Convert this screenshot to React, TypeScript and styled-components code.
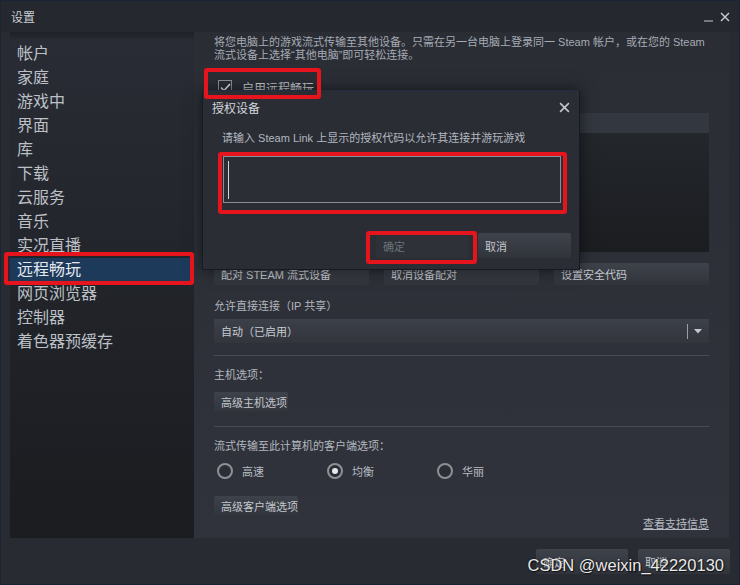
import styled, { createGlobalStyle } from "styled-components";

const GlobalStyle = createGlobalStyle`
  html, body {
    margin: 0;
    padding: 0;
    background: #282b32;
  }
  body {
    font-family: "Liberation Sans", "Noto Sans CJK SC", sans-serif;
  }
  * {
    box-sizing: border-box;
  }
`;

const Window = styled.div`
  position: relative;
  width: 740px;
  height: 585px;
  border: 1px solid #1b2433;
  background: #282b32;
  display: flex;
  flex-direction: column;
  overflow: hidden;
`;

const TitleBar = styled.div`
  height: 31px;
  flex: none;
  display: flex;
  align-items: center;
  justify-content: space-between;
  padding: 0 9px 0 10px;
  background: #25282e;
  color: #c9cdd4;
  font-size: 12px;
`;

const WindowControls = styled.div`
  display: flex;
  align-items: center;
  gap: 6px;
`;

const Body = styled.div`
  height: 506px;
  flex: none;
  display: flex;
  padding-left: 9px;
`;

const Sidebar = styled.nav`
  width: 184px;
  flex: none;
  padding-top: 10px;
  background: linear-gradient(
    180deg,
    #1e2127 0px,
    #23262c 5px,
    #292c34 8px,
    #1b1d21 92%
  );
`;

const MenuItem = styled.div<{ $active?: boolean }>`
  height: 24px;
  line-height: 24px;
  padding-left: 7px;
  font-size: 16px;
  color: ${(p) => (p.$active ? "#e4e8ee" : "#bcc0c7")};
  background: ${(p) => (p.$active ? "#1d3a5b" : "transparent")};
  white-space: nowrap;
`;

const Panel = styled.section`
  width: 535px;
  flex: none;
  padding: 4px 20px 0 20px;
  display: flex;
  flex-direction: column;
  background: linear-gradient(180deg, #2a2d34, #30333b);
`;

const Intro = styled.p`
  margin: 0;
  font-size: 11px;
  line-height: 13px;
  color: #a6abb4;
`;

const CheckRow = styled.label`
  margin-top: 18px;
  height: 14px;
  display: flex;
  align-items: center;
  gap: 10px;
  padding-left: 4px;
  font-size: 12px;
  color: #c4c8ce;
`;

const CheckBox = styled.span`
  width: 14px;
  height: 14px;
  border: 1px solid #8d9199;
  background: #2a2d34;
  display: flex;
  align-items: center;
  justify-content: center;
`;

const DeviceList = styled.div`
  margin-top: 19px;
  height: 139px;
  display: flex;
  flex-direction: column;
  background: linear-gradient(180deg, #25282d, #1b1d21);
`;

const DeviceHeader = styled.div`
  height: 20px;
  background: #33373f;
`;

const ButtonRow = styled.div`
  margin-top: 11px;
  display: grid;
  grid-template-columns: 155px 155px 155px;
  justify-content: space-between;
`;

const Button = styled.button<{ $w?: number; $h?: number; $disabled?: boolean }>`
  width: ${(p) => (p.$w ? `${p.$w}px` : "auto")};
  height: ${(p) => p.$h ?? 22}px;
  padding: 0 7px;
  border: none;
  border-radius: 2px;
  text-align: left;
  font-family: inherit;
  font-size: 11px;
  color: ${(p) => (p.$disabled ? "#6c717a" : "#c3c7ce")};
  background: ${(p) =>
    p.$disabled ? "#2e3138" : "linear-gradient(180deg, #3e424a, #31343b)"};
  white-space: nowrap;
`;

const Label = styled.div<{ $gap?: number }>`
  margin-top: ${(p) => p.$gap ?? 11}px;
  font-size: 11px;
  line-height: 16px;
  color: #b2b7bf;
`;

const Select = styled.div`
  margin-top: 5px;
  height: 24px;
  display: flex;
  align-items: center;
  padding: 0 7px;
  background: linear-gradient(180deg, #3c4048, #32353c);
  font-size: 11px;
  color: #c8ccd3;
`;

const SelectValue = styled.span`
  flex: 1;
`;

const SelectDivider = styled.span`
  width: 1px;
  height: 15px;
  background: #9a9ea5;
  margin-right: 6px;
`;

const Separator = styled.hr<{ $gap: number }>`
  margin: ${(p) => p.$gap}px 0 0 0;
  height: 1px;
  border: none;
  background: #474b52;
`;

const SmallButtonWrap = styled.div<{ $gap: number }>`
  margin-top: ${(p) => p.$gap}px;
  display: flex;
`;

const RadioRow = styled.div`
  margin-top: 9px;
  height: 16px;
  display: grid;
  grid-template-columns: 110px 110px 110px;
  padding-left: 3px;
`;

const Radio = styled.label`
  display: flex;
  align-items: center;
  gap: 9px;
  font-size: 11px;
  color: #b9bdc4;
`;

const RadioDot = styled.span<{ $on?: boolean }>`
  width: 16px;
  height: 16px;
  border-radius: 50%;
  border: 2px solid #8c9097;
  background: #2b2e35;
  display: flex;
  align-items: center;
  justify-content: center;
  &::after {
    content: "";
    width: 6px;
    height: 6px;
    border-radius: 50%;
    background: ${(p) => (p.$on ? "#e6e8ec" : "transparent")};
  }
`;

const LinkRow = styled.div`
  margin-top: 1px;
  display: flex;
  justify-content: flex-end;
`;

const Link = styled.a`
  font-size: 11px;
  line-height: 14px;
  color: #b6bbc3;
  text-decoration: underline;
`;

const Footer = styled.div`
  flex: 1;
  display: flex;
  justify-content: flex-end;
  gap: 10px;
  padding: 11px 9px 0 0;
`;

/* modal */
const Dialog = styled.div`
  position: absolute;
  left: 201px;
  top: 89px;
  width: 378px;
  height: 180px;
  display: flex;
  flex-direction: column;
  border: 1px solid #151b26;
  border-top-color: #1f2d40;
  background: #2a2d34;
  box-shadow: 0 0 14px rgba(0, 0, 0, 0.55);
`;

const DialogHead = styled.div`
  height: 32px;
  display: flex;
  align-items: center;
  justify-content: space-between;
  padding: 0 9px 0 9px;
  font-size: 12px;
  color: #d2d6dc;
`;

const DialogText = styled.div`
  margin-top: 8px;
  padding-left: 19px;
  font-size: 11px;
  line-height: 14px;
  color: #b3b8c0;
`;

const CodeInput = styled.div`
  margin: 11px 0 0 20px;
  width: 338px;
  height: 47px;
  border: 1px solid #8a8e97;
  background: #2b2e35;
  padding: 4px 4px;
`;

const Caret = styled.div`
  width: 1px;
  height: 38px;
  background: #cfd3da;
`;

const DialogButtons = styled.div`
  margin-top: 30px;
  display: flex;
  justify-content: flex-end;
  gap: 9px;
  padding-right: 8px;
`;

/* red annotation outlines */
const Mark = styled.div<{ $x: number; $y: number; $w: number; $h: number }>`
  position: absolute;
  left: ${(p) => p.$x}px;
  top: ${(p) => p.$y}px;
  width: ${(p) => p.$w}px;
  height: ${(p) => p.$h}px;
  border: 4px solid #e5141d;
  border-radius: 3px;
  pointer-events: none;
`;

const Watermark = styled.div`
  position: absolute;
  right: 15px;
  bottom: 9px;
  font-family: "Liberation Sans", Arial, sans-serif;
  font-size: 16.5px;
  color: #e9e9e9;
  text-shadow: 0 0 2px rgba(0, 0, 0, 0.8), 1px 1px 1px rgba(0, 0, 0, 0.6);
  white-space: nowrap;
`;

const menu = [
  "帐户",
  "家庭",
  "游戏中",
  "界面",
  "库",
  "下载",
  "云服务",
  "音乐",
  "实况直播",
  "远程畅玩",
  "网页浏览器",
  "控制器",
  "着色器预缓存",
];

const CloseIcon = ({ size = 10, color = "#c9cdd4" }: { size?: number; color?: string }) => (
  <svg width={size} height={size} viewBox="0 0 10 10">
    <path d="M1 1 L9 9 M9 1 L1 9" stroke={color} strokeWidth="1.4" />
  </svg>
);

export default function App() {
  return (
    <>
      <GlobalStyle />
      <Window>
        <TitleBar>
          <span>设置</span>
          <WindowControls>
            <svg width="10" height="10" viewBox="0 0 10 10">
              <path d="M0 9 H9" stroke="#8f949b" strokeWidth="1.5" />
            </svg>
            <CloseIcon />
          </WindowControls>
        </TitleBar>

        <Body>
          <Sidebar>
            {menu.map((m) => (
              <MenuItem key={m} $active={m === "远程畅玩"}>
                {m}
              </MenuItem>
            ))}
          </Sidebar>

          <Panel>
            <Intro>
              将您电脑上的游戏流式传输至其他设备。只需在另一台电脑上登录同一 Steam 帐户，或在您的 Steam
              <br />
              流式设备上选择“其他电脑”即可轻松连接。
            </Intro>
            <CheckRow>
              <CheckBox>
                <svg width="11" height="9" viewBox="0 0 11 9">
                  <path d="M1 4.5 L4 7.5 L10 1" fill="none" stroke="#e2e5ea" strokeWidth="1.6" />
                </svg>
              </CheckBox>
              启用远程畅玩
            </CheckRow>

            <DeviceList>
              <DeviceHeader />
            </DeviceList>

            <ButtonRow>
              <Button>配对 STEAM 流式设备</Button>
              <Button>取消设备配对</Button>
              <Button>设置安全代码</Button>
            </ButtonRow>

            <Label $gap={13}>允许直接连接（IP 共享）</Label>
            <Select>
              <SelectValue>自动（已启用）</SelectValue>
              <SelectDivider />
              <svg width="8" height="5" viewBox="0 0 8 5">
                <path d="M0 0 H8 L4 4.5 Z" fill="#c4c8cf" />
              </svg>
            </Select>

            <Separator $gap={12} />
            <Label>主机选项：</Label>
            <SmallButtonWrap $gap={9}>
              <Button $w={74} $h={20}>高级主机选项</Button>
            </SmallButtonWrap>

            <Separator $gap={14} />
            <Label $gap={11}>流式传输至此计算机的客户端选项：</Label>
            <RadioRow>
              <Radio>
                <RadioDot />
                高速
              </Radio>
              <Radio>
                <RadioDot $on />
                均衡
              </Radio>
              <Radio>
                <RadioDot />
                华丽
              </Radio>
            </RadioRow>
            <SmallButtonWrap $gap={17}>
              <Button $w={84} $h={20}>高级客户端选项</Button>
            </SmallButtonWrap>
            <LinkRow>
              <Link>查看支持信息</Link>
            </LinkRow>
          </Panel>
        </Body>

        <Footer>
          <Button $w={92} $h={25}>确定</Button>
          <Button $w={92} $h={25}>取消</Button>
        </Footer>

        <Dialog>
          <DialogHead>
            <span>授权设备</span>
            <CloseIcon size={11} color="#c3c7ce" />
          </DialogHead>
          <DialogText>请输入 Steam Link 上显示的授权代码以允许其连接并游玩游戏</DialogText>
          <CodeInput>
            <Caret />
          </CodeInput>
          <DialogButtons>
            <Button $w={93} $h={25} $disabled>确定</Button>
            <Button $w={93} $h={25}>取消</Button>
          </DialogButtons>
        </Dialog>

        <Mark $x={203} $y={67} $w={117} $h={31} />
        <Mark $x={217} $y={151} $w={349} $h={62} />
        <Mark $x={365} $y={230} $w={111} $h={33} />
        <Mark $x={3} $y={251} $w={190} $h={33} />

        <Watermark>CSDN @weixin_42220130</Watermark>
      </Window>
    </>
  );
}
